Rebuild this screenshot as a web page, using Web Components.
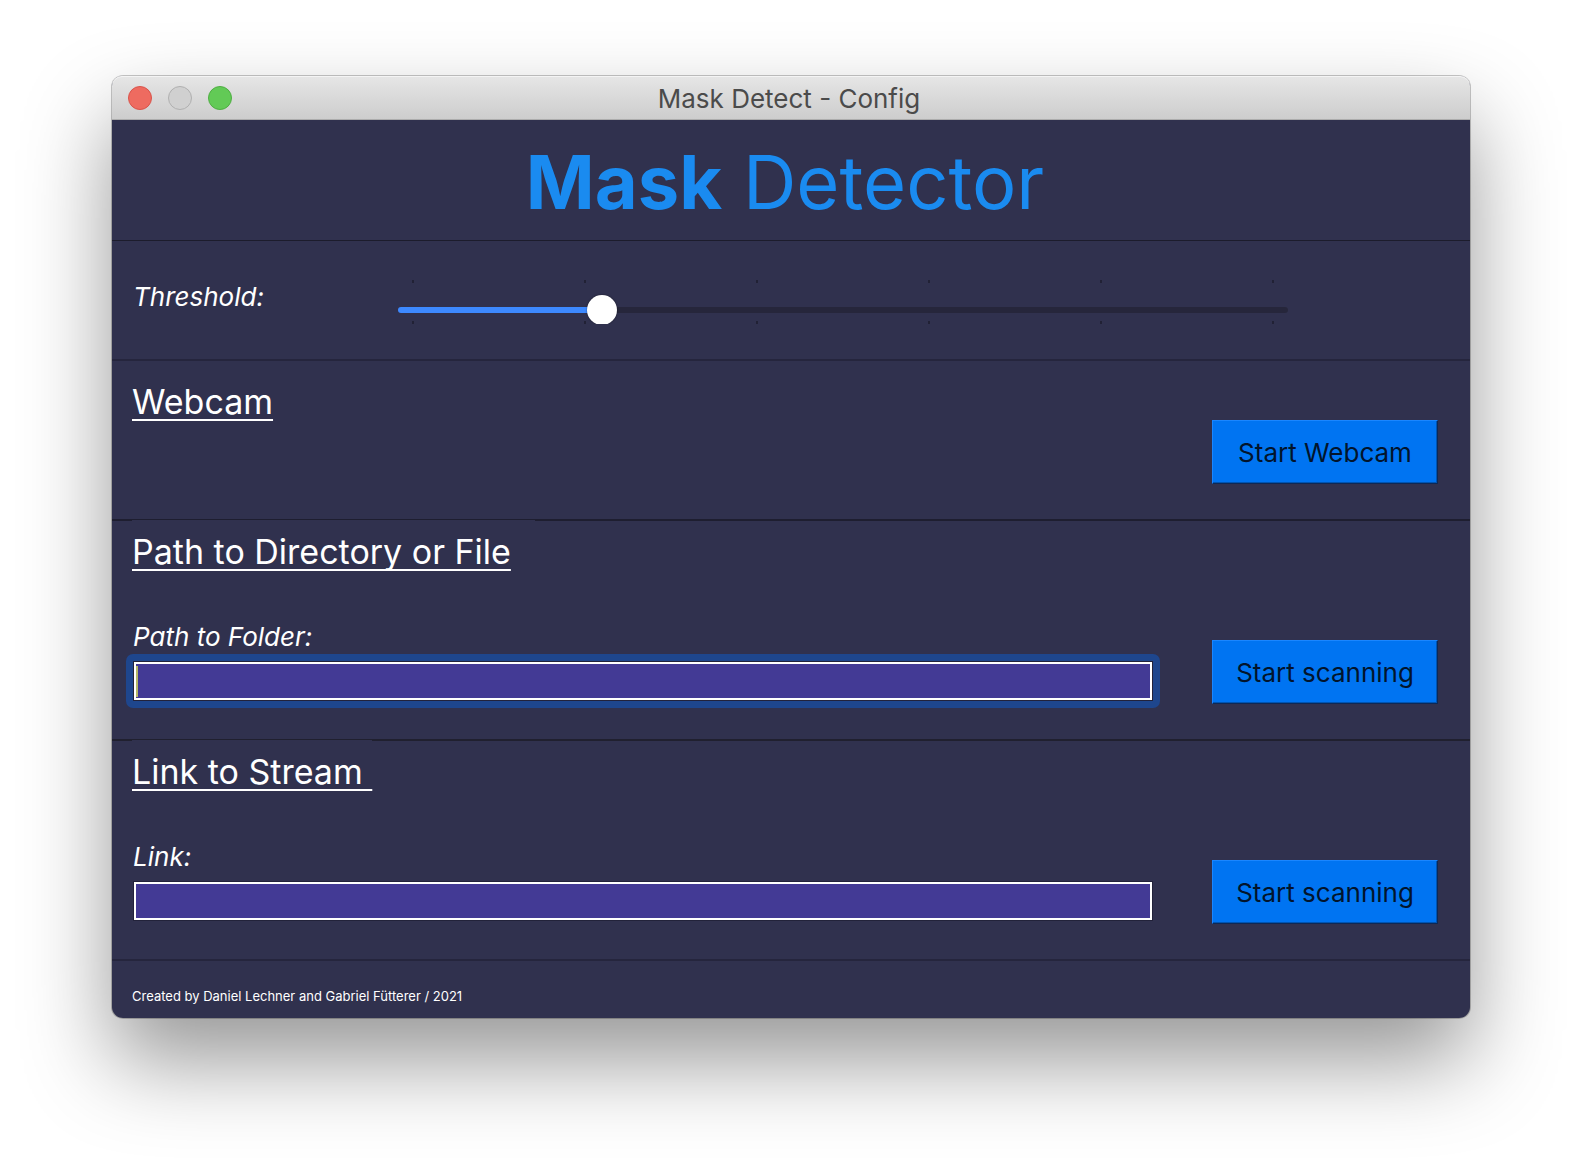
<!DOCTYPE html>
<html lang="en">
<head>
<meta charset="utf-8">
<title>Mask Detect - Config</title>
<style>
  html { background: #fff; }
  body {
    margin: 0;
    padding: 76px 112px 148px;
    font-family: Inter, "Liberation Sans", sans-serif;
    color: #fff;
  }
</style>
</head>
<body>
<app-window heading="Mask Detect - Config">
  <app-banner><strong>Mask</strong> Detector</app-banner>
  <threshold-slider label="Threshold:" value="22"></threshold-slider>
  <source-section class="inline" heading="Webcam">
    <action-button>Start Webcam</action-button>
  </source-section>
  <source-section class="form wide" heading="Path to Directory or File">
    <text-field label="Path to Folder:" active></text-field>
    <action-button>Start scanning</action-button>
  </source-section>
  <source-section class="form last" heading="Link to Stream&nbsp;">
    <text-field label="Link:"></text-field>
    <action-button>Start scanning</action-button>
  </source-section>
  <app-credits>Created by Daniel Lechner and Gabriel Fütterer / 2021</app-credits>
</app-window>

<script>
  class BaseElement extends HTMLElement {
    connectedCallback() {
      if (this.shadowRoot) return;
      this.attachShadow({ mode: "open" }).innerHTML = this.template();
    }
    attr(name) { return this.getAttribute(name) || ""; }
  }

  customElements.define("app-window", class extends BaseElement {
    template() {
      return `
      <style>
        :host {
          display: block; border-radius: 11px; background: #30314e;
          box-shadow: 0 0 0 1px rgba(0,0,0,.22), 0 43px 88px rgba(0,0,0,.41);
        }
        header {
          display: grid; grid-template-columns: 1fr auto 1fr; align-items: center;
          height: 44px; box-sizing: border-box; padding: 0 20px 0 16px;
          border-radius: 10px 10px 0 0; border-bottom: 1px solid #acacac;
          background: linear-gradient(#e6e6e6, #cdcdcd);
          box-shadow: inset 0 1px #f4f4f4;
        }
        .lights { display: flex; gap: 16px; }
        .lights button {
          width: 24px; height: 24px; padding: 0; border-radius: 50%;
          border: 1px solid #b0b0b0; background: #d0d0d0;
        }
        .lights .close { background: #ee6b60; border-color: #d9544b; }
        .lights .zoom { background: #62ca56; border-color: #4fae43; }
        h1 { margin: 0; padding-top: 2px; font-size: 26px; line-height: 32px; font-weight: 400; color: #4b4b4b; }
      </style>
      <header>
        <div class="lights">
          <button class="close" aria-label="Close"></button>
          <button class="minimise" aria-label="Minimise" disabled></button>
          <button class="zoom" aria-label="Zoom"></button>
        </div>
        <h1>${this.attr("heading")}</h1>
      </header>
      <main><slot></slot></main>`;
    }
  });

  customElements.define("app-banner", class extends BaseElement {
    template() {
      return `
      <style>
        :host { display: block; padding: 14px 12px 10px 0; border-bottom: 1px solid #1c1c2c; text-align: center; }
        div { font-size: 74px; line-height: 96px; font-weight: 400; color: #1a8bf0; }
        ::slotted(strong) { font-weight: 700; }
      </style>
      <div><slot></slot></div>`;
    }
  });

  customElements.define("threshold-slider", class extends BaseElement {
    template() {
      const v = this.attr("value");
      const ticks = "<i></i>".repeat(6);
      return `
      <style>
        :host {
          display: grid; grid-template-columns: 266px 1fr; align-items: start;
          padding: 39px 182px 35px 20px; border-bottom: 2px solid #25253d;
        }
        label { padding: 1px 0 0 1px; font-size: 26px; line-height: 32px; font-style: italic; }
        .scale { display: grid; height: 44px; overflow: hidden; }
        .scale > * { grid-area: 1 / 1; }
        .ticks { display: flex; justify-content: space-between; padding: 0 14px; }
        .ticks i {
          width: 2px;
          background: linear-gradient(#212135 3px, transparent 3px 41px, #212135 41px);
        }
        input {
          -webkit-appearance: none; appearance: none; background: none;
          width: 100%; height: 30px; margin: 15px 0 0; min-width: 0;
        }
        input::-webkit-slider-runnable-track {
          height: 6px; border-radius: 3px;
          background: linear-gradient(to right, #3d89ff ${v}%, #26263b ${v}%);
        }
        input::-webkit-slider-thumb {
          -webkit-appearance: none; width: 30px; height: 30px; margin-top: -12px;
          border-radius: 50%; background: #fff; box-shadow: 0 0 2px rgba(0,0,0,.5);
        }
      </style>
      <label for="range">${this.attr("label")}</label>
      <div class="scale">
        <div class="ticks">${ticks}</div>
        <input id="range" type="range" min="0" max="100" value="${v}">
      </div>`;
    }
  });

  customElements.define("source-section", class extends BaseElement {
    template() {
      return `
      <style>
        :host { display: block; padding: 0 32px 35px 20px; border-bottom: 2px solid #20202f; }
        h2 {
          margin: 0; font-size: 34px; line-height: 44px; font-weight: 400; white-space: pre;
          text-decoration: underline 2px; text-underline-offset: 5px; text-decoration-skip-ink: none;
        }
        .row { display: flex; align-items: flex-end; justify-content: flex-end; gap: 60px; }
        :host(.inline) { display: flex; justify-content: space-between; padding-top: 19px; border-bottom-color: #1e1e30; }
        :host(.inline) .row { margin-top: 40px; }
        :host(.form) h2 {
          position: relative; width: fit-content; margin-top: -1px; padding-top: 10px;
          background: #30314e;
        }
        :host(.wide) h2 { padding-right: 24px; }
        :host(.last) { border-bottom-color: #25253d; }
        :host(.form) .row { margin-top: 47px; }
      </style>
      <h2>${this.attr("heading")}</h2>
      <div class="row"><slot></slot></div>`;
    }
  });

  customElements.define("text-field", class extends BaseElement {
    template() {
      return `
      <style>
        :host { display: flex; flex-direction: column; flex: 1; gap: 1px; margin-bottom: -4px; }
        label { padding-left: 1px; font-size: 26px; line-height: 32px; font-style: italic; }
        .ring { display: flex; padding: 8px; margin: 0 -8px 0 -6px; border-radius: 7px; }
        input {
          flex: 1; height: 38px; box-sizing: border-box; margin: 0; padding: 0 4px;
          border: 2px solid #fff; border-radius: 0; outline: none;
          background: #433a95; color: #fff; font: 24px/30px Inter, sans-serif;
          box-shadow: 0 0 0 1px #22223a;
        }
        :host([active]) .ring { background: #1e468d; }
        :host([active]) input {
          background: linear-gradient(#b5b867, #b5b867) 0 2px / 2px 31px no-repeat #433a95;
        }
      </style>
      <label for="field">${this.attr("label")}</label>
      <div class="ring"><input id="field" type="text"></div>`;
    }
  });

  customElements.define("action-button", class extends BaseElement {
    template() {
      return `
      <style>
        :host { display: block; flex: none; }
        button {
          display: block; width: 226px; height: 64px; padding: 2px 0 0; border-radius: 0;
          border: 1px solid; border-color: #1a86ff #0d2855 #0d2855 #1a86ff;
          background: #0074f2; color: #02142c;
          box-shadow: inset -1px -1px #0054b2;
          font: 26px/32px Inter, "Liberation Sans", sans-serif;
        }
      </style>
      <button type="button"><slot></slot></button>`;
    }
  });

  customElements.define("app-credits", class extends BaseElement {
    template() {
      return `
      <style>
        :host { display: block; padding: 27px 20px 14px; font-size: 13px; line-height: 16px; }
      </style>
      <slot></slot>`;
    }
  });
</script>
</body>
</html>
